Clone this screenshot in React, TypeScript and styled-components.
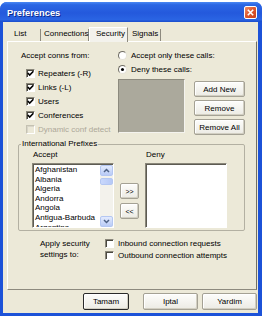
import React from 'react';
import styled, { createGlobalStyle, css } from 'styled-components';

const Global = createGlobalStyle`
  html, body { margin: 0; padding: 0; background: #ffffff; }
  body { font-family: "Liberation Sans", Arial, sans-serif; font-size: 8px; color: #000; }
  * { box-sizing: border-box; }
`;

const Page = styled.div`
  width: 265px;
  height: 320px;
  padding-top: 2px;
  overflow: hidden;
`;

const Window = styled.div`
  width: 262px;
  height: 314px;
  display: flex;
  flex-direction: column;
  border-radius: 7px 7px 0 0;
  overflow: hidden;
  background: #1c52d8;
`;

const TitleBar = styled.div`
  height: 20px;
  flex: none;
  display: flex;
  align-items: center;
  justify-content: space-between;
  padding: 0 5px 0 7px;
  background: linear-gradient(#4a88f3 0%, #2b66e4 14%, #2459dc 55%, #2a64e3 88%, #1a4ccb 100%);
`;

const Title = styled.span`
  color: #fff;
  font-weight: bold;
  font-size: 9.3px;
  text-shadow: 1px 1px 0 #0d2a8a;
  margin-top: 1px;
`;

const CloseBtn = styled.div`
  width: 13px;
  height: 13px;
  border: 1px solid #fff;
  border-radius: 2px;
  background: linear-gradient(135deg, #f0906a 0%, #e05a30 45%, #c8401c 100%);
  display: flex;
  align-items: center;
  justify-content: center;
`;

const Client = styled.div`
  flex: 1;
  margin: 0 4px 3px 3px;
  background: #ece9d8;
  padding: 5px 1px 3px 4px;
  display: flex;
  flex-direction: column;
`;

const TabStrip = styled.div`
  height: 14px;
  display: flex;
  align-items: flex-end;
  position: relative;
  z-index: 1;
`;

const Tab = styled.div<{ $w: number; $pl: number; $active?: boolean }>`
  width: ${p => p.$w}px;
  padding-left: ${p => p.$pl}px;
  height: 12px;
  line-height: 10px;
  border-right: 1px solid #8d8a7e;
  white-space: nowrap;
  ${p => p.$active && css`
    height: 15px;
    margin-bottom: -1px;
    line-height: 12px;
    background: #f3f2ec;
    border-top: 1px solid #fff;
    border-left: 1px solid #fff;
  `}
`;

const Panel = styled.div`
  height: 249px;
  border: 1px solid;
  border-color: #ffffff #716f64 #8d8a7e #ffffff;
  background: #ece9d8;
  display: flex;
  flex-direction: column;
`;

const TopSection = styled.div`
  display: flex;
  padding: 6px 0 0 13px;
`;

const LeftCol = styled.div`
  width: 97px;
  display: flex;
  flex-direction: column;
`;

const Label = styled.div`
  height: 14px;
  line-height: 14px;
  margin-top: 1px;
  white-space: nowrap;
`;

const CheckList = styled.div`
  margin-top: 3px;
  display: flex;
  flex-direction: column;
`;

const CheckRow = styled.div<{ $h?: number; $pl?: number; $gap?: number }>`
  height: ${p => p.$h ?? 14}px;
  display: flex;
  align-items: center;
  gap: ${p => p.$gap ?? 3}px;
  padding-left: ${p => p.$pl ?? 5}px;
  white-space: nowrap;
`;

const RowText = styled.span<{ $disabled?: boolean }>`
  color: ${p => (p.$disabled ? '#aca899' : '#000')};
`;

const Box = styled.div<{ $disabled?: boolean }>`
  width: 9px;
  height: 9px;
  flex: none;
  background: ${p => (p.$disabled ? '#ece9d8' : '#fff')};
  border: 1px solid;
  border-color: ${p => (p.$disabled ? '#c5c2b2 #fff #fff #c5c2b2' : '#8a877a #fff #fff #8a877a')};
  box-shadow: inset 1px 1px 0 ${p => (p.$disabled ? '#d8d5c8' : '#4a4840')};
  display: flex;
  align-items: center;
  justify-content: center;
`;

const RightCol = styled.div`
  display: flex;
  flex-direction: column;
`;

const RadioRow = styled.div`
  height: 14px;
  display: flex;
  align-items: center;
  gap: 4px;
  white-space: nowrap;
`;

const Radio = styled.div<{ $on?: boolean }>`
  width: 9px;
  height: 9px;
  border-radius: 50%;
  background: #fff;
  border: 1px solid;
  border-color: #6e6c62 #e4e2d8 #e4e2d8 #6e6c62;
  display: flex;
  align-items: center;
  justify-content: center;
  &::after {
    content: '';
    display: ${p => (p.$on ? 'block' : 'none')};
    width: 3px;
    height: 3px;
    border-radius: 50%;
    background: #000;
  }
`;

const CallsArea = styled.div`
  margin-top: 3px;
  display: flex;
  gap: 9px;
`;

const GrayBox = styled.div`
  width: 67px;
  height: 54px;
  background: #aba99c;
  border: 1px solid;
  border-color: #8c8a7e #f4f3ee #f4f3ee #8c8a7e;
`;

const ButtonCol = styled.div`
  margin-top: 2px;
  display: flex;
  flex-direction: column;
  gap: 3px;
`;

const Button = styled.div<{ $w: number; $h?: number; $default?: boolean; $mr?: number; $fs?: number }>`
  width: ${p => p.$w}px;
  height: ${p => p.$h ?? 16}px;
  margin-right: ${p => p.$mr ?? 0}px;
  display: flex;
  align-items: center;
  justify-content: center;
  font-size: ${p => p.$fs ?? 8}px;
  white-space: nowrap;
  background: linear-gradient(#fdfdfb, #ecebe4);
  border: 1px solid ${p => (p.$default ? '#2a2a2a' : '#a4a194')};
  border-radius: 2px;
  box-shadow: inset -1px -1px 0 #d2cfc2, inset 1px 1px 0 #ffffff;
`;

const Group = styled.fieldset`
  margin: 3px 11px 0 10px;
  padding: 0;
  min-width: 0;
  border: 1px solid #b3b0a2;
  border-radius: 2px;
`;

const Legend = styled.legend`
  margin-left: 2px;
  padding: 0 1px;
  line-height: 10px;
  font-size: 8px;
`;

const PrefixGrid = styled.div`
  display: grid;
  grid-template-columns: 82px 19px 82px;
  grid-template-rows: 10px 65px;
  column-gap: 6px;
  row-gap: 3px;
  margin: 1px 0 2px 13px;
`;

const ColLabel = styled.div`
  line-height: 10px;
  padding-left: 1px;
`;

const ListBox = styled.div`
  width: 82px;
  height: 65px;
  background: #fff;
  border: 1px solid;
  border-color: #8a877a #fff #fff #8a877a;
  box-shadow: inset 1px 1px 0 #5d5b52;
  display: flex;
  overflow: hidden;
`;

const Items = styled.div`
  flex: 1;
  padding: 1px 0 0 2px;
  overflow: hidden;
`;

const Item = styled.div`
  height: 9.6px;
  line-height: 9.6px;
  white-space: nowrap;
`;

const ScrollBar = styled.div`
  width: 13px;
  margin-top: 1px;
  display: flex;
  flex-direction: column;
  background: #f3f2ec;
`;

const ScrollBtn = styled.div`
  height: 11px;
  border: 1px solid #b4c7f2;
  border-radius: 2px;
  background: linear-gradient(#e3ebfe, #b9cbf6);
  display: flex;
  align-items: center;
  justify-content: center;
`;

const Thumb = styled.div`
  height: 7px;
  margin-top: 2px;
  border: 1px solid #b4c7f2;
  border-radius: 2px;
  background: linear-gradient(90deg, #c9d8fc, #b6c9f6);
`;

const Track = styled.div`
  flex: 1;
`;

const MoveCol = styled.div`
  display: flex;
  flex-direction: column;
  gap: 4px;
  padding-top: 20px;
`;

const ApplySection = styled.div`
  margin-top: 5px;
  display: flex;
  padding-left: 32px;
`;

const ApplyText = styled.div`
  width: 65px;
  line-height: 11px;
  padding-top: 2px;
`;

const ApplyChecks = styled.div`
  display: flex;
  flex-direction: column;
  padding-top: 1px;
`;

const BottomRow = styled.div`
  margin-top: 3px;
  height: 17px;
  display: flex;
  justify-content: flex-end;
  gap: 4px;
`;

const Check = () => (
  <svg width="7" height="7" viewBox="0 0 7 7">
    <path d="M0.7 3 L2.7 5 L6.4 1.3" fill="none" stroke="#000" strokeWidth="1.6" />
  </svg>
);

const CheckBox = ({ checked, disabled }: { checked?: boolean; disabled?: boolean }) => (
  <Box $disabled={disabled}>{checked && <Check />}</Box>
);

const Chevron = ({ up }: { up?: boolean }) => (
  <svg width="7" height="5" viewBox="0 0 7 5">
    <path d={up ? 'M1 4 L3.5 1.5 L6 4' : 'M1 1 L3.5 3.5 L6 1'} fill="none" stroke="#4d6185" strokeWidth="1.5" />
  </svg>
);

const countries = ['Afghanistan', 'Albania', 'Algeria', 'Andorra', 'Angola', 'Antigua-Barbuda', 'Argentina'];

const conns = [
  { label: 'Repeaters (-R)', checked: true },
  { label: 'Links (-L)', checked: true },
  { label: 'Users', checked: true },
  { label: 'Conferences', checked: true },
  { label: 'Dynamic conf detect', checked: false, disabled: true },
];

export default function App() {
  return (
    <Page>
      <Global />
      <Window>
        <TitleBar>
          <Title>Preferences</Title>
          <CloseBtn>
            <svg width="7" height="7" viewBox="0 0 7 7">
              <path d="M0.8 0.8 L6.2 6.2 M6.2 0.8 L0.8 6.2" stroke="#fff" strokeWidth="1.6" />
            </svg>
          </CloseBtn>
        </TitleBar>
        <Client>
          <TabStrip>
            <Tab $w={34} $pl={7}>List</Tab>
            <Tab $w={48} $pl={3}>Connections</Tab>
            <Tab $w={39} $pl={6} $active>Security</Tab>
            <Tab $w={33} $pl={4}>Signals</Tab>
          </TabStrip>
          <Panel>
            <TopSection>
              <LeftCol>
                <Label>Accept conns from:</Label>
                <CheckList>
                  {conns.map(c => (
                    <CheckRow key={c.label}>
                      <CheckBox checked={c.checked} disabled={c.disabled} />
                      <RowText $disabled={c.disabled}>{c.label}</RowText>
                    </CheckRow>
                  ))}
                </CheckList>
              </LeftCol>
              <RightCol>
                <RadioRow>
                  <Radio />
                  <span>Accept only these calls:</span>
                </RadioRow>
                <RadioRow>
                  <Radio $on />
                  <span>Deny these calls:</span>
                </RadioRow>
                <CallsArea>
                  <GrayBox />
                  <ButtonCol>
                    <Button $w={51}>Add New</Button>
                    <Button $w={51}>Remove</Button>
                    <Button $w={51}>Remove All</Button>
                  </ButtonCol>
                </CallsArea>
              </RightCol>
            </TopSection>
            <Group>
              <Legend>International Prefixes</Legend>
              <PrefixGrid>
                <ColLabel>Accept</ColLabel>
                <div />
                <ColLabel>Deny</ColLabel>
                <ListBox>
                  <Items>
                    {countries.map(c => (
                      <Item key={c}>{c}</Item>
                    ))}
                  </Items>
                  <ScrollBar>
                    <ScrollBtn><Chevron up /></ScrollBtn>
                    <Thumb />
                    <Track />
                    <ScrollBtn><Chevron /></ScrollBtn>
                  </ScrollBar>
                </ListBox>
                <MoveCol>
                  <Button $w={19} $fs={7}>&gt;&gt;</Button>
                  <Button $w={19} $fs={7}>&lt;&lt;</Button>
                </MoveCol>
                <ListBox />
              </PrefixGrid>
            </Group>
            <ApplySection>
              <ApplyText>
                Apply security
                <br />
                settings to:
              </ApplyText>
              <ApplyChecks>
                <CheckRow $h={12} $pl={0} $gap={4}>
                  <CheckBox />
                  <span>Inbound connection requests</span>
                </CheckRow>
                <CheckRow $h={12} $pl={0} $gap={4}>
                  <CheckBox />
                  <span>Outbound connection attempts</span>
                </CheckRow>
              </ApplyChecks>
            </ApplySection>
          </Panel>
          <BottomRow>
            <Button $w={46} $h={17} $mr={10} $default>Tamam</Button>
            <Button $w={55} $h={17}>Iptal</Button>
            <Button $w={55} $h={17}>Yardim</Button>
          </BottomRow>
        </Client>
      </Window>
    </Page>
  );
}
